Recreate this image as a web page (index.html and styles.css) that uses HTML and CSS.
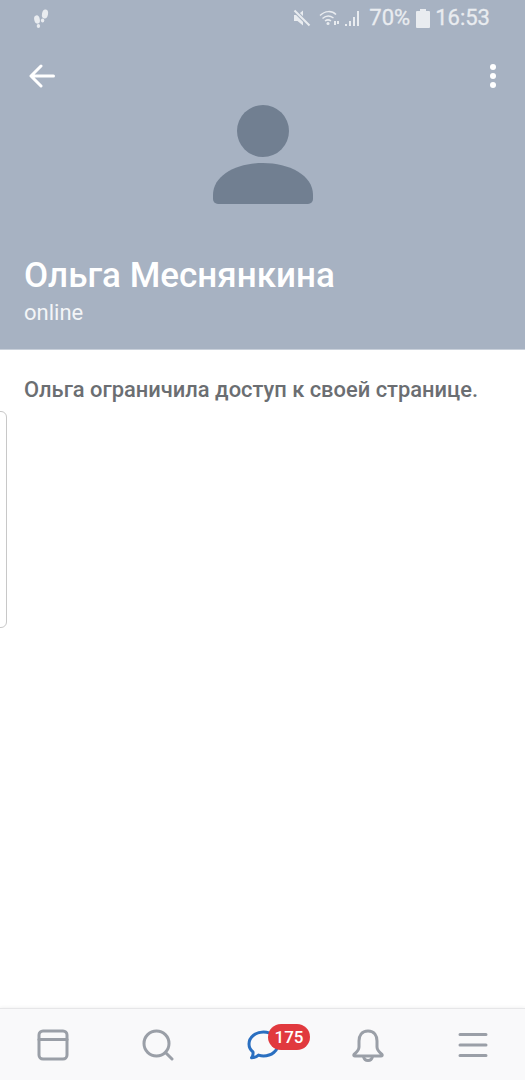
FILE: index.html
```html
<!DOCTYPE html>
<html lang="en">
<head>
  <meta charset="UTF-8" />
  <meta name="viewport" content="width=device-width, initial-scale=1.0"/>
  <title>Ольга Меснянкина</title>
  <link rel="stylesheet" href="styles.css">
</head>
<body>
  <div class="screen">
    <header class="profile-head">
      <div class="status-bar">
        <svg class="steps" width="18" height="22" viewBox="0 0 18 22">
          <ellipse cx="13" cy="7" rx="3" ry="4.6" transform="rotate(10 13 7)"/>
          <ellipse cx="10.6" cy="13.4" rx="1.7" ry="2" />
          <ellipse cx="5" cy="12.5" rx="2.8" ry="4.2" transform="rotate(-12 5 12.5)"/>
          <ellipse cx="6.4" cy="19" rx="1.7" ry="2"/>
        </svg>
        <div class="status-right">
          <svg class="st-mute" width="18" height="18" viewBox="0 0 18 18">
            <path d="M1 6h3.500L10 1.500v15L4.500 12H1z"/>
            <path d="M1.500 1.500L16.500 16.500" stroke="#a7b2c2" stroke-width="4"/>
            <path d="M1.500 1.500L16.500 16.500" class="st-line" stroke-width="2"/>
          </svg>
          <svg class="st-wifi" width="21" height="18" viewBox="0 0 21 18">
            <path class="st-arc" d="M1 6.500C6 1.500 13 1.500 17 5.500M3.500 9.500C7 6.500 11 6.500 14.500 9M6 12c2-1.500 4-1.500 6 0"/>
            <circle cx="9" cy="14.500" r="1.500"/>
            <path d="M15 12h2v4h-2zM18 15h2v-3h-2z"/>
          </svg>
          <svg class="st-signal" width="17" height="18" viewBox="0 0 17 18">
            <path d="M0 15h2v2H0zM4 12h2v5H4zM8 8h2v9H8zM12 2h2v15h-2z"/>
          </svg>
          <span class="st-text st-pct">70%</span>
          <svg class="st-battery" width="14" height="20" viewBox="0 0 14 20">
            <path d="M4 1h6v2h3a1 1 0 0 1 1 1v15a1 1 0 0 1-1 1H1a1 1 0 0 1-1-1V4a1 1 0 0 1 1-1h3z"/>
          </svg>
          <span class="st-text">16:53</span>
        </div>
      </div>

      <div class="toolbar">
        <svg class="icon-back" width="26" height="24" viewBox="0 0 26 24">
          <path d="M24.500 12H2.500M12 2L2 12l10 10"/>
        </svg>
        <div class="dots"><i></i><i></i><i></i></div>
      </div>

      <div class="avatar">
        <svg width="100" height="100" viewBox="0 0 100 100">
          <circle cx="50" cy="26" r="26"/>
          <path d="M0 90C0 70 24 58 50 58s50 12 50 32v4a5 5 0 0 1-5 5H5a5 5 0 0 1-5-5z"/>
        </svg>
      </div>

      <div class="profile-info">
        <h1>Ольга Меснянкина</h1>
        <p>online</p>
      </div>
    </header>

    <main class="content">
      <p class="notice">Ольга ограничила доступ к своей странице.</p>
    </main>

    <div class="edge-handle"></div>

    <nav class="tabbar">
      <a class="tab">
        <svg width="32" height="32" viewBox="0 0 32 32"><rect x="2" y="2" width="28" height="28" rx="4"/><path d="M2 10.500h28"/></svg>
      </a>
      <a class="tab">
        <svg width="32" height="32" viewBox="0 0 32 32"><circle cx="14.500" cy="14.500" r="12.500"/><path d="M24 24l6 6"/></svg>
      </a>
      <a class="tab tab-active">
        <svg width="32" height="32" viewBox="0 0 32 32"><path d="M16.500 3C8.500 3 2 8.300 2 15c0 3.300 1.500 6 4 8 .3 2-.5 4.500-1.500 5.800 3 0 5.500-1.300 7-2.700 1.500.5 3.200.9 5 .9 8 0 14.500-5.300 14.500-12S24.500 3 16.500 3z"/></svg>
        <span class="badge">175</span>
      </a>
      <a class="tab">
        <svg width="32" height="34" viewBox="0 0 32 34"><path d="M16 2C9.500 2 7 7 7 12v6c0 3-2 5-5 7.500-.5.800 0 1.500 1 1.500h26c1 0 1.500-.7 1-1.500-3-2.500-5-4.500-5-7.500v-6c0-5-2.500-10-9-10z"/><path d="M11.500 27.500c.5 2.500 2.300 4 4.500 4s4-1.500 4.500-4"/></svg>
      </a>
      <a class="tab">
        <svg width="32" height="32" viewBox="0 0 32 32"><path d="M3 5.500h26M3 16h26M3 26.500h26"/></svg>
      </a>
    </nav>
  </div>
</body>
</html>
```

FILE: styles.css
```css
* {
  box-sizing: border-box;
}
body {
  margin: 0;
  font-family: Roboto, "Liberation Sans", sans-serif;
  background: #fff;
}
.screen {
  position: relative;
  display: flex;
  flex-direction: column;
  height: 1080px;
  overflow: hidden;
}
.profile-head {
  height: 350px;
  background: #a7b2c2;
  border-bottom: 1px solid #c9d0da;
  color: #fff;
}
.status-bar {
  display: flex;
  justify-content: space-between;
  align-items: center;
  height: 36px;
  padding: 0 35px 0 32px;
  color: #e9ecf0;
}
.status-bar svg {
  display: block;
  fill: #e9ecf0;
}
.status-right {
  display: flex;
  align-items: center;
}
.st-text {
  font-size: 22px;
  line-height: 36px;
  -webkit-text-stroke: 0.3px #e9ecf0;
}
.st-pct {
  margin-left: 7px;
  margin-right: 6px;
}
.st-battery {
  margin-right: 5px;
}
.st-wifi {
  margin-left: 8px;
}
.st-signal {
  margin-left: 5px;
}
.status-bar .st-arc,
.status-bar .st-line {
  fill: none;
  stroke: #e9ecf0;
}
.status-bar .st-arc {
  stroke-width: 1.500;
}
.toolbar {
  display: flex;
  justify-content: space-between;
  align-items: center;
  height: 24px;
  margin-top: 28px;
  padding: 0 29px 0 29px;
}
.icon-back {
  fill: none;
  stroke: #fff;
  stroke-width: 3;
  stroke-linecap: round;
  stroke-linejoin: round;
}
.dots {
  display: flex;
  flex-direction: column;
  gap: 3px;
}
.dots i {
  display: block;
  width: 6px;
  height: 6px;
  border-radius: 50%;
  background: #fff;
}
.avatar {
  display: flex;
  justify-content: center;
  height: 100px;
  margin-top: 17px;
}
.avatar svg {
  display: block;
  fill: #717f91;
}
.profile-info {
  padding: 50px 24px 0;
}
.profile-info h1 {
  margin: 0;
  font-size: 35px;
  line-height: 42px;
  font-weight: 500;
}
.profile-info p {
  margin: 3px 0 0;
  font-size: 22px;
  line-height: 26px;
  color: #f3f5f7;
}
.content {
  flex: 1;
  padding: 26px 24px 0;
}
.notice {
  margin: 0;
  font-size: 21.9px;
  line-height: 28px;
  font-weight: 500;
  color: #6b6e72;
}
.edge-handle {
  position: absolute;
  left: -6px;
  top: 411px;
  width: 13px;
  height: 217px;
  border: 1px solid #c8c8c8;
  border-radius: 6px;
  background: #fff;
}
.tabbar {
  display: flex;
  height: 72px;
  background: #f9f9fa;
  border-top: 1px solid #e6e6e8;
  box-shadow: 0 -1px 3px rgba(0,0,0,0.05);
}
.tab {
  position: relative;
  display: flex;
  flex: 1;
  justify-content: center;
  padding-top: 20px;
}
.tab svg {
  display: block;
  fill: none;
  stroke: #9a9fa7;
  stroke-width: 3;
  stroke-linecap: round;
  stroke-linejoin: round;
}
.tab-active svg {
  stroke: #2a6fc0;
}
.badge {
  position: absolute;
  left: 58px;
  top: 15px;
  padding: 0 6.5px;
  height: 26px;
  border-radius: 13px;
  background: #e1393e;
  color: #fff;
  font-size: 17px;
  font-weight: 500;
  line-height: 26px;
}
```
